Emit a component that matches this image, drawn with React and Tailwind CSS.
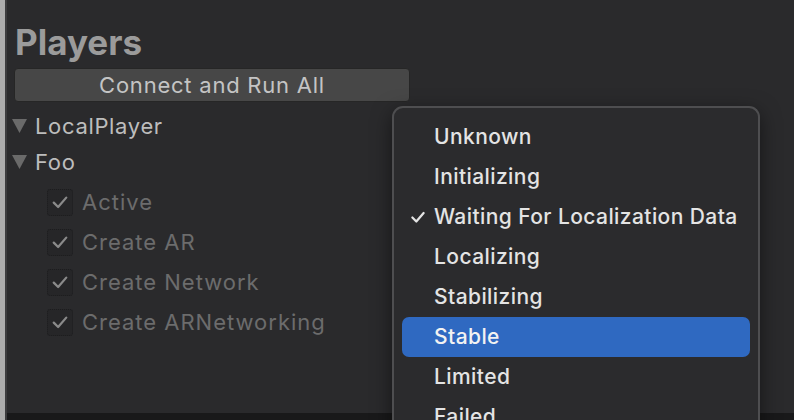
import { useState } from 'react';

const states = [
  'Unknown',
  'Initializing',
  'Waiting For Localization Data',
  'Localizing',
  'Stabilizing',
  'Stable',
  'Limited',
  'Failed',
];

function Triangle() {
  return (
    <svg width="15" height="14" viewBox="0 0 15 14" className="shrink-0">
      <path d="M0 0 H15 L7.5 14 Z" fill="#6a6a6a" />
    </svg>
  );
}

function Check({ color = '#8a8a8a', size = 16, width = 2 }) {
  return (
    <svg width={size} height={size} viewBox="0 0 16 16" fill="none">
      <path d="M3 8.5 L6.5 12 L13 4.5" stroke={color} strokeWidth={width} strokeLinecap="round" strokeLinejoin="round" />
    </svg>
  );
}

function Toggle({ label }) {
  return (
    <div className="flex h-[40px] items-center gap-[9px] pl-[40px]">
      <div className="flex h-[27px] w-[26px] items-center justify-center rounded-[3px] border border-dotted border-[#1c1c1e] bg-[#262628]">
        <Check size={20} width={1.8} />
      </div>
      <span className="text-[22px] tracking-[0.045em] text-[#6c6c6c]">{label}</span>
    </div>
  );
}

export default function App() {
  const [selected] = useState('Stable');

  return (
    <div className="relative flex h-[420px] w-[794px] overflow-hidden bg-[#2a2a2c] font-['Inter',sans-serif]">
      {/* window edge */}
      <div className="w-[5px] bg-[#acacac]" />
      <div className="w-[2px] bg-[#3c3c3e]" />

      <div className="flex flex-1 flex-col">
        <div className="flex-1 pt-[22px]">
          <h1 className="pl-[8px] text-[35px] leading-[40px] font-bold text-[#9b9b9b]">Players</h1>
          <button className="ml-[7px] mt-[6px] flex h-[34px] w-[396px] items-center justify-center rounded-[4px] border border-[#262626] bg-[#474747] text-[22px] tracking-[0.035em] text-[#c4c4c4]">
            Connect and Run All
          </button>

          <div className="mt-[6px]">
            <div className="flex h-[36px] items-center gap-[8px] pl-[5px]">
              <Triangle />
              <span className="text-[22px] tracking-[0.03em] text-[#bdbdbd]">LocalPlayer</span>
            </div>
            <div className="flex h-[36px] items-center gap-[8px] pl-[5px]">
              <Triangle />
              <span className="text-[22px] tracking-[0.03em] text-[#bdbdbd]">Foo</span>
            </div>
            <div className="mt-[2px]">
              <Toggle label="Active" />
              <Toggle label="Create AR" />
              <Toggle label="Create Network" />
              <Toggle label="Create ARNetworking" />
            </div>
          </div>
        </div>
        <div className="h-[7px] bg-[#19191a]" />
      </div>

      {/* popup menu */}
      <div className="absolute left-[392px] top-[106px] w-[368px] rounded-t-[11px] border-2 border-b-0 border-[#4e4e50] bg-[#2b2b2d] px-[8px] pt-[9px] pb-[20px] shadow-[0_6px_20px_rgba(0,0,0,0.5)]">
        {states.map((s) => (
          <div
            key={s}
            className={
              s === selected
                ? 'relative flex h-[40px] items-center rounded-[7px] bg-[#2f69c1] pl-[32px] text-[21px] tracking-[0.02em] font-medium text-[#f2f2f2]'
                : 'relative flex h-[40px] items-center rounded-[7px] pl-[32px] text-[21px] tracking-[0.02em] font-medium text-[#e4e4e4]'
            }
          >
            {s === 'Waiting For Localization Data' && (
              <span className="absolute left-[7px] top-[11px]">
                <Check color="#e4e4e4" size={18} />
              </span>
            )}
            {s}
          </div>
        ))}
      </div>
    </div>
  );
}
